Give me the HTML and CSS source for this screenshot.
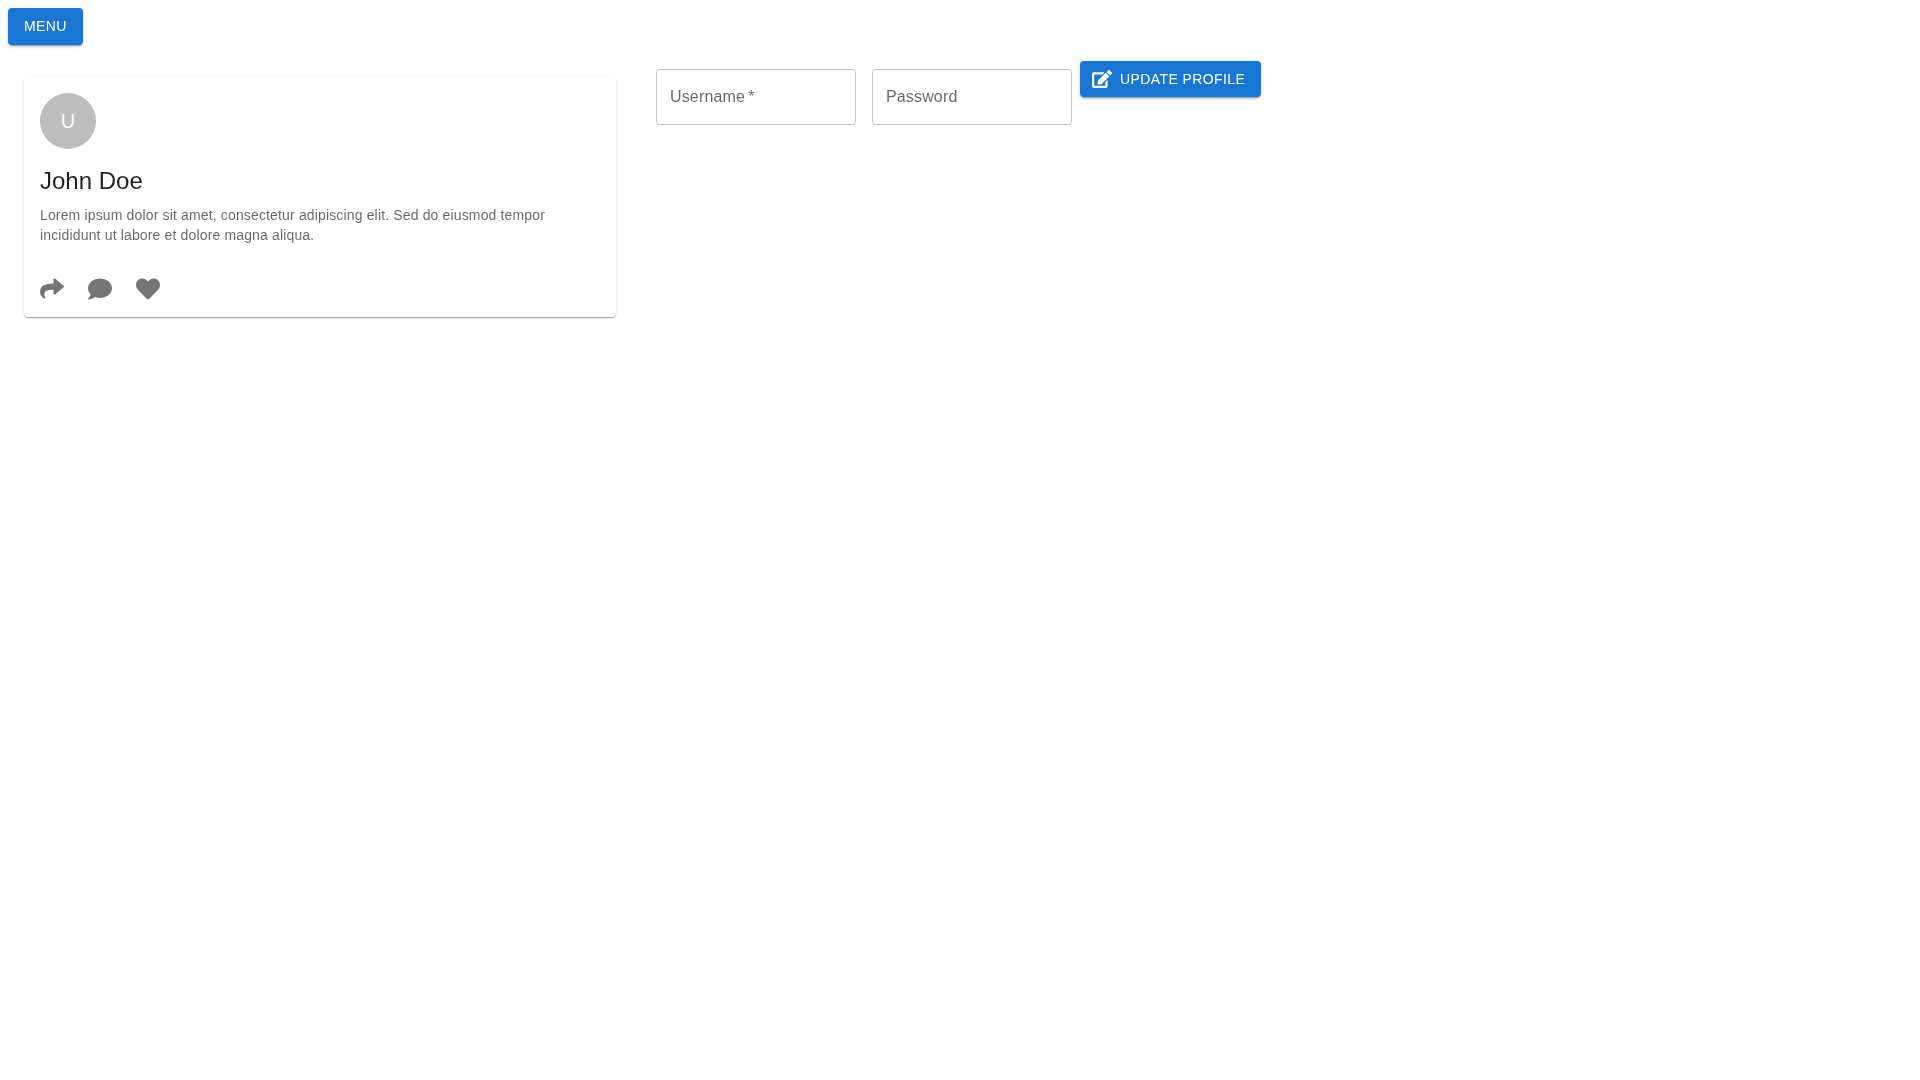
FILE: index.html
```html
<!DOCTYPE html>
<html lang="en">
<head>
<meta charset="utf-8">
<title>Profile</title>
<link rel="stylesheet" href="styles.css">
</head>
<body>
<header class="toolbar">
  <button class="btn" type="button">Menu</button>
</header>
<main class="content">
  <article class="card">
    <div class="avatar">U</div>
    <h2 class="name">John Doe</h2>
    <p class="bio">Lorem ipsum dolor sit amet, consectetur adipiscing elit. Sed do eiusmod tempor incididunt ut labore et dolore magna aliqua.</p>
    <div class="actions">
      <svg class="icon" viewBox="0 0 512 512" aria-hidden="true"><path d="M503.691 189.836L327.687 37.851C312.281 24.546 288 35.347 288 56.015v80.053C127.371 137.907 0 170.1 0 322.326c0 61.441 39.581 107.013 82.225 137.943 13.307 9.653 32.273-2.462 27.367-18.112C65.398 305.557 126.2 276.2 288 272.4v80c0 20.7 24.3 31.5 39.7 18.2l176-152c11.1-9.6 11.1-26.8 0-36.4z"/></svg>
      <svg class="icon" viewBox="0 0 512 512" aria-hidden="true"><path d="M256 32C114.6 32 0 125.1 0 240c0 49.6 21.4 95 57 130.7C44.5 421.1 2.7 466 2.2 466.5c-2.2 2.3-2.8 5.7-1.5 8.7S4.8 480 8 480c66.3 0 116-31.8 140.6-51.4 32.7 12.3 69 19.4 107.4 19.4 141.4 0 256-93.1 256-208S397.4 32 256 32z"/></svg>
      <svg class="icon" viewBox="0 0 512 512" aria-hidden="true"><path d="M462.3 62.6C407.5 15.9 326 24.3 275.7 76.2L256 96.5l-19.7-20.3C186.1 24.3 104.5 15.9 49.7 62.6c-62.8 53.6-66.1 149.8-9.9 207.9l193.5 199.8c12.5 12.9 32.8 12.9 45.3 0l193.5-199.8c56.3-58.1 53-154.3-9.8-207.9z"/></svg>
    </div>
  </article>
  <form class="form">
    <div class="field"><span class="label">Username&thinsp;*</span></div>
    <div class="field"><span class="label">Password</span></div>
    <button class="btn btn-icon" type="button">
      <svg class="edit" viewBox="0 0 576 512" aria-hidden="true"><path d="M402.6 83.2l90.2 90.2c3.8 3.8 3.8 10 0 13.8L274.4 405.6l-92.8 10.3c-12.4 1.4-22.9-9.1-21.5-21.5l10.3-92.8L388.8 83.2c3.8-3.8 10-3.8 13.8 0zm162-22.9l-48.8-48.8c-15.2-15.2-39.9-15.2-55.2 0l-35.4 35.4c-3.8 3.8-3.8 10 0 13.8l90.2 90.2c3.8 3.8 10 3.8 13.8 0l35.4-35.4c15.2-15.3 15.2-40 0-55.2zM384 346.2V448H64V128h229.8c3.2 0 6.2-1.3 8.5-3.5l40-40c7.6-7.6 2.2-20.5-8.5-20.5H48C21.5 64 0 85.5 0 112v352c0 26.5 21.5 48 48 48h352c26.5 0 48-21.5 48-48V306.2c0-10.7-12.9-16-20.5-8.5l-40 40c-2.2 2.3-3.5 5.3-3.5 8.5z"/></svg>
      Update Profile
    </button>
  </form>
</main>
</body>
</html>
```
FILE: styles.css
```css
* { box-sizing: border-box; }
html, body { height: 100%; }
body {
  margin: 0;
  padding: 8px;
  background: #fff;
  font-family: "Liberation Sans", Arial, sans-serif;
  color: rgba(0, 0, 0, 0.87);
}
.toolbar { display: flex; margin-bottom: 16.5px; will-change: transform; }
.btn {
  display: inline-flex;
  align-items: center;
  justify-content: center;
  height: 36.5px;
  padding: 6px 16px;
  border: 0;
  border-radius: 4px;
  background: #1976d2;
  color: #fff;
  font-family: inherit;
  font-size: 14px;
  font-weight: 500;
  line-height: 24.5px;
  letter-spacing: 0.4px;
  text-transform: uppercase;
  box-shadow: 0 3px 1px -2px rgba(0,0,0,.2), 0 2px 2px 0 rgba(0,0,0,.14), 0 1px 5px 0 rgba(0,0,0,.12);
}
.btn-icon { height: 36px; margin-left: 0; padding-left: 12px; gap: 8px; }
.edit { width: 20px; height: 20px; fill: #fff; flex: none; }
.content { display: flex; align-items: flex-start; will-change: transform; }
.card {
  width: 592px;
  margin: 16px 16px 0 16px;
  padding: 16px;
  border-radius: 4px;
  background: #fff;
  box-shadow: 0 2px 1px -1px rgba(0,0,0,.2), 0 1px 1px 0 rgba(0,0,0,.14), 0 1px 3px 0 rgba(0,0,0,.12);
}
.avatar {
  display: flex;
  align-items: center;
  justify-content: center;
  width: 56px;
  height: 56px;
  border-radius: 50%;
  background: #bdbdbd;
  color: #fff;
  font-size: 20px;
}
.name {
  margin: 16px 0 8px;
  font-size: 24px;
  font-weight: 400;
  line-height: 32px;
}
.bio {
  margin: 0;
  font-size: 14px;
  line-height: 20px;
  letter-spacing: 0.15px;
  color: rgba(0, 0, 0, 0.6);
}
.actions { display: flex; gap: 24px; margin-top: 32px; }
.icon { width: 24px; height: 24px; fill: rgba(0, 0, 0, 0.54); }
.form { display: flex; align-items: flex-start; margin-left: 16px; }
.field {
  display: flex;
  align-items: center;
  width: 200px;
  height: 56px;
  margin: 8px;
  padding: 0 13px;
  border: 1px solid rgba(0, 0, 0, 0.23);
  border-radius: 4px;
}
.label { font-size: 16px; color: rgba(0, 0, 0, 0.6); letter-spacing: 0.15px; }
```
